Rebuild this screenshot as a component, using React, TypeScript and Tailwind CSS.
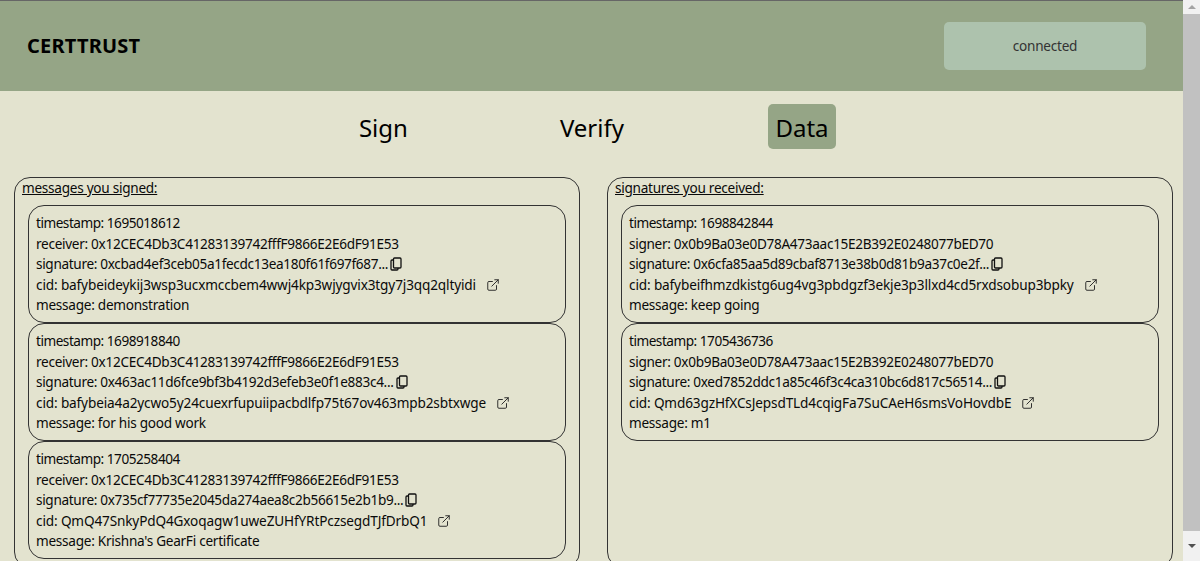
import { ExternalLink } from 'lucide-react';

const signed = [
  {
    timestamp: '1695018612',
    party: '0x12CEC4Db3C41283139742fffF9866E2E6dF91E53',
    signature: '0xcbad4ef3ceb05a1fecdc13ea180f61f697f687...',
    cid: 'bafybeideykij3wsp3ucxmccbem4wwj4kp3wjygvix3tgy7j3qq2qltyidi',
    message: 'demonstration',
  },
  {
    timestamp: '1698918840',
    party: '0x12CEC4Db3C41283139742fffF9866E2E6dF91E53',
    signature: '0x463ac11d6fce9bf3b4192d3efeb3e0f1e883c4...',
    cid: 'bafybeia4a2ycwo5y24cuexrfupuiipacbdlfp75t67ov463mpb2sbtxwge',
    message: 'for his good work',
  },
  {
    timestamp: '1705258404',
    party: '0x12CEC4Db3C41283139742fffF9866E2E6dF91E53',
    signature: '0x735cf77735e2045da274aea8c2b56615e2b1b9...',
    cid: 'QmQ47SnkyPdQ4Gxoqagw1uweZUHfYRtPczsegdTJfDrbQ1',
    message: "Krishna's GearFi certificate",
  },
];

const received = [
  {
    timestamp: '1698842844',
    party: '0x0b9Ba03e0D78A473aac15E2B392E0248077bED70',
    signature: '0x6cfa85aa5d89cbaf8713e38b0d81b9a37c0e2f...',
    cid: 'bafybeifhmzdkistg6ug4vg3pbdgzf3ekje3p3llxd4cd5rxdsobup3bpky',
    message: 'keep going',
  },
  {
    timestamp: '1705436736',
    party: '0x0b9Ba03e0D78A473aac15E2B392E0248077bED70',
    signature: '0xed7852ddc1a85c46f3c4ca310bc6d817c56514...',
    cid: 'Qmd63gzHfXCsJepsdTLd4cqigFa7SuCAeH6smsVoHovdbE',
    message: 'm1',
  },
];

type Entry = (typeof signed)[number];

function CopyIcon() {
  return (
    <svg width="12" height="14" viewBox="0 0 12 14" fill="none" stroke="#111" strokeWidth="1.3" className="ml-[2px] shrink-0">
      <path d="M4.5 1h5.5a1 1 0 0 1 1 1v8a1 1 0 0 1-1 1h-5.5a1 1 0 0 1-1-1V2a1 1 0 0 1 1-1z" />
      <path d="M3.5 3H2a1 1 0 0 0-1 1v8a1 1 0 0 0 1 1h5a1 1 0 0 0 1-1v-1" />
    </svg>
  );
}

function EntryCard({ entry, partyLabel }: { entry: Entry; partyLabel: string }) {
  return (
    <div className="h-[118px] rounded-[16px] border border-[#333] px-[7px] pt-[7px]">
      <p className="tracking-[-0.48px]">timestamp: {entry.timestamp}</p>
      <p className="tracking-[-0.3px]">
        {partyLabel}: {entry.party}
      </p>
      <p className="flex items-center tracking-[-0.33px]">
        signature: {entry.signature}
        <CopyIcon />
      </p>
      <p className="flex items-center tracking-[-0.14px]">
        cid: {entry.cid}
        <ExternalLink size={14} strokeWidth={1.6} className="ml-[10px] shrink-0 text-[#222]" />
      </p>
      <p className="tracking-[-0.27px]">message: {entry.message}</p>
    </div>
  );
}

function Panel({ title, entries, partyLabel }: { title: string; entries: Entry[]; partyLabel: string }) {
  return (
    <section className="h-[391px] w-[566px] rounded-[16px] border border-[#333] px-[13px]">
      <h2 className="mb-[7px] -ml-[6px] leading-[20px] tracking-[-0.27px] underline">{title}</h2>
      <div className="flex flex-col">
        {entries.map((entry) => (
          <EntryCard key={entry.timestamp} entry={entry} partyLabel={partyLabel} />
        ))}
      </div>
    </section>
  );
}

export default function App() {
  return (
    <div className="flex h-[561px] w-[1200px] overflow-hidden bg-[#e3e3cf] font-['Noto_Sans','Open_Sans',sans-serif] text-[13.6px] leading-[20.6px] text-[#0a0a0a]">
      <div className="w-[1183px] shrink-0">
        <header className="flex h-[91px] items-center justify-between border-t border-[#666] bg-[#95a586] pl-[27px] pr-[37px]">
          <h1 className="text-[20px] font-bold tracking-[0.2px] text-black">CERTTRUST</h1>
          <div className="flex h-[48px] w-[202px] items-center justify-center rounded-[5px] bg-[#adc2ad] tracking-[-0.25px] text-[#333]">
            connected
          </div>
        </header>
        <nav className="flex h-[86px] items-start justify-center gap-[136px] pt-[13px] pl-[4px] text-[24px] leading-[43px] text-black">
          <a className="px-2 pt-[2px]">Sign</a>
          <a className="px-2 pt-[2px]">Verify</a>
          <a className="rounded-[5px] bg-[#95a586] px-[7.5px] pt-[2px]">Data</a>
        </nav>
        <main className="flex gap-[27px] pl-[14px]">
          <Panel title="messages you signed:" entries={signed} partyLabel="receiver" />
          <Panel title="signatures you received:" entries={received} partyLabel="signer" />
        </main>
      </div>
      <div className="flex w-[17px] shrink-0 flex-col items-center bg-[#f1f1f1]">
        <div className="flex h-[14px] items-center justify-center">
          <div className="h-0 w-0 border-x-[4px] border-b-[4px] border-x-transparent border-b-[#a3a3a3]" />
        </div>
        <div className="h-[517px] w-full bg-[#c1c1c1]" />
        <div className="flex flex-1 items-center justify-center">
          <div className="h-0 w-0 border-x-[4px] border-t-[4px] border-x-transparent border-t-[#505050]" />
        </div>
      </div>
    </div>
  );
}
